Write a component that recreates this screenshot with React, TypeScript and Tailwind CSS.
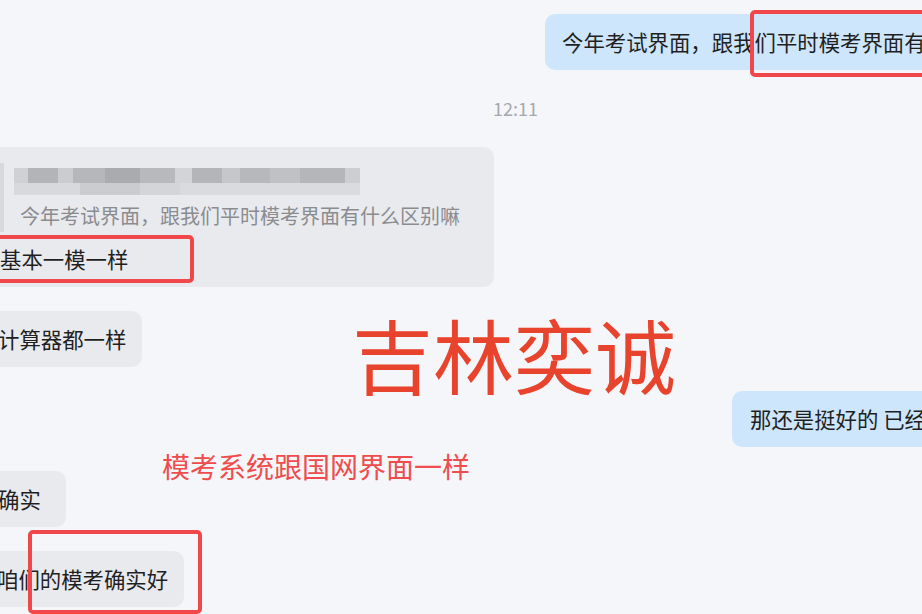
const blurTop = [
  ['w-[14px]', 'bg-[#d0d1d4]'],
  ['w-[30px]', 'bg-[#b3b4b7]'],
  ['w-[15px]', 'bg-[#cbccd0]'],
  ['w-[32px]', 'bg-[#b6b7ba]'],
  ['w-[35px]', 'bg-[#aaabae]'],
  ['w-[35px]', 'bg-[#b8b9bc]'],
  ['w-[17px]', 'bg-[#d3d4d7]'],
  ['w-[30px]', 'bg-[#b4b5b8]'],
  ['w-[18px]', 'bg-[#c6c7ca]'],
  ['w-[30px]', 'bg-[#b7b8bb]'],
  ['w-[30px]', 'bg-[#c0c1c4]'],
  ['w-[45px]', 'bg-[#b5b6b9]'],
  ['w-[15px]', 'bg-[#cdced1]'],
];

const blurBottom = [
  ['w-[66px]', 'bg-[#d8d9dc]'],
  ['w-[60px]', 'bg-[#cbccd0]'],
  ['w-[40px]', 'bg-[#d4d5d8]'],
  ['w-[180px]', 'bg-[#dadbde]'],
];

const RedBox = ({ className }: { className: string }) => (
  <div className={`pointer-events-none absolute rounded-[5px] border-[4px] border-[#f0474b] ${className}`} />
);

export default function App() {
  return (
    <div className="relative h-[614px] w-[922px] overflow-hidden bg-[#f5f6f9] font-['Noto_Sans_CJK_SC',sans-serif] text-[#1f1f1f]">
      <div className="flex flex-col pt-[14px]">
        {/* outgoing */}
        <div className="flex pl-[545px]">
          <div className="h-[56px] shrink-0 whitespace-nowrap rounded-[10px] bg-[#cde6fb] pl-[17px] pr-[18px] text-[21.4px] leading-[56px]">
            今年考试界面，跟我们平时模考界面有什么区别嘛
          </div>
        </div>

        <div className="mt-[28px] pl-[493px] text-[18px] leading-[20px] text-[#a5a8ad]">12:11</div>

        {/* reply with quote */}
        <div className="-ml-[20px] mt-[29px] h-[140px] w-[514px] rounded-[10px] bg-[#e9eaee] pl-[20px] pt-[16px]">
          <div className="border-l-[4px] border-[#d8d9dd] pl-[16px]">
            <div className="h-[36px] pt-[5px]">
              <div className="-ml-[6px] blur-[0.6px]">
                <div className="flex h-[15px]">
                  {blurTop.map(([w, c], i) => (
                    <div key={i} className={`h-full ${w} ${c}`} />
                  ))}
                </div>
                <div className="flex h-[12px]">
                  {blurBottom.map(([w, c], i) => (
                    <div key={i} className={`h-full ${w} ${c}`} />
                  ))}
                </div>
              </div>
            </div>
            <div className="whitespace-nowrap text-[20px] leading-[33px] text-[#8a8c90]">
              今年考试界面，跟我们平时模考界面有什么区别嘛
            </div>
          </div>
          <div className="mt-[13px] text-[21.4px] leading-[28px]">基本一模一样</div>
        </div>

        <div className="-ml-[20px] mt-[24px] h-[56px] self-start whitespace-nowrap rounded-[10px] bg-[#e9eaee] pl-[18px] pr-[16px] text-[21.4px] leading-[56px]">
          计算器都一样
        </div>

        <div className="ml-[732px] mt-[24px] h-[56px] shrink-0 self-start whitespace-nowrap rounded-[10px] bg-[#cde6fb] pl-[18px] pr-[200px] text-[21.4px] leading-[56px]">
          那还是挺好的 已经
        </div>

        <div className="-ml-[20px] mt-[24px] h-[56px] self-start whitespace-nowrap rounded-[10px] bg-[#e9eaee] pl-[18px] pr-[25px] text-[21.4px] leading-[56px]">
          确实
        </div>

        <div className="-ml-[20px] mt-[24px] h-[56px] self-start whitespace-nowrap rounded-[10px] bg-[#e9eaee] pl-[17px] pr-[16px] text-[21.4px] leading-[56px]">
          咱们的模考确实好
        </div>
      </div>

      {/* annotations */}
      <div className="absolute left-[352px] top-[312px] whitespace-nowrap text-[81px] leading-none text-[#e8432c]">
        吉林奕诚
      </div>
      <div className="absolute left-[162px] top-[452px] whitespace-nowrap text-[28px] leading-none text-[#ef4d4d]">
        模考系统跟国网界面一样
      </div>

      <RedBox className="left-[750px] top-[10px] h-[67px] w-[220px]" />
      <RedBox className="-left-[10px] top-[235px] h-[48px] w-[204px]" />
      <RedBox className="left-[28px] top-[530px] h-[84px] w-[174px]" />
    </div>
  );
}
